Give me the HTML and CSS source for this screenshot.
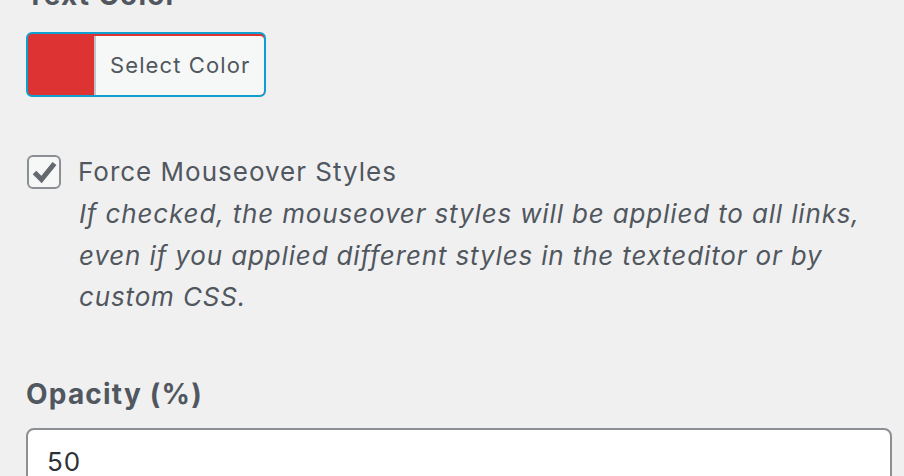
FILE: index.html
```html
<!DOCTYPE html>
<html lang="en">
<head>
<meta charset="utf-8">
<title>Settings</title>
<link rel="stylesheet" href="styles.css">
</head>
<body>
<div class="page">
  <section class="field field-color">
    <h2 class="field-title">Text Color</h2>
    <button class="color-result" type="button">
      <span class="color-swatch"></span>
      <span class="color-text">Select Color</span>
    </button>
  </section>

  <section class="field field-check">
    <label class="check-row">
      <span class="checkbox">
        <svg viewBox="0 0 30 30" width="30" height="30" aria-hidden="true"><polyline points="5.5,15.5 12.5,22.5 25.5,6.5" fill="none" stroke="#646970" stroke-width="5" stroke-linejoin="miter"/></svg>
      </span>
      <span class="check-label">Force Mouseover Styles</span>
    </label>
    <p class="description">If checked, the mouseover styles will be applied to all links, even if you applied different styles in the texteditor or by custom CSS.</p>
  </section>

  <section class="field field-number">
    <h2 class="field-title">Opacity (%)</h2>
    <div class="text-input">50</div>
  </section>
</div>
</body>
</html>
```
FILE: styles.css
```css
html, body {
  margin: 0;
  padding: 0;
  background: #f0f0f1;
  overflow: hidden;
}
body {
  font-family: Inter, "Noto Sans", "Liberation Sans", sans-serif;
  color: #50575e;
}
.page {
  padding-left: 26px;
  padding-right: 12px;
  margin-top: -23px;
}
.field-title {
  margin: 0;
  font-size: 28px;
  font-weight: 700;
  line-height: 36px;
  letter-spacing: 1.2px;
  color: #50575e;
}
.color-result {
  margin-top: 19px;
  display: flex;
  width: 240px;
  height: 65px;
  padding: 0;
  border: 2px solid #0fa0cf;
  border-radius: 6px;
  background: #dd3333;
  overflow: hidden;
  cursor: pointer;
  font-family: inherit;
}
.color-swatch {
  width: 66px;
  flex: none;
}
.color-text {
  flex: 1;
  display: flex;
  align-items: center;
  padding-left: 14px;
  padding-bottom: 2px;
  margin-top: 2px;
  border-left: 2px solid #c3c4c7;
  background: #f6f7f7;
  font-size: 22px;
  letter-spacing: 1.1px;
  color: #50575e;
  border-radius: 0 4px 4px 0;
}
.field-check {
  margin-top: 58px;
}
.check-row {
  display: flex;
  align-items: center;
  gap: 17px;
}
.checkbox {
  width: 34px;
  height: 34px;
  box-sizing: border-box;
  border: 2px solid #8c8f94;
  border-radius: 6px;
  background: #f6f7f7;
  display: flex;
  align-items: center;
  justify-content: center;
  margin-left: 1px;
}
.check-label {
  font-size: 26px;
  line-height: 34px;
  letter-spacing: 1px;
}
.description {
  margin: 4px 0 0 53px;
  font-size: 26px;
  line-height: 41.5px;
  font-style: italic;
  letter-spacing: 0.85px;
  color: #50575e;
}
.field-number {
  margin-top: 58px;
}
.text-input {
  margin-top: 16px;
  height: 80px;
  box-sizing: border-box;
  border: 2px solid #8c8f94;
  border-radius: 8px;
  background: #fff;
  padding: 16px 19px 0;
  font-size: 26px;
  letter-spacing: 1px;
  color: #2c3338;
  width: 866px;
}
```
